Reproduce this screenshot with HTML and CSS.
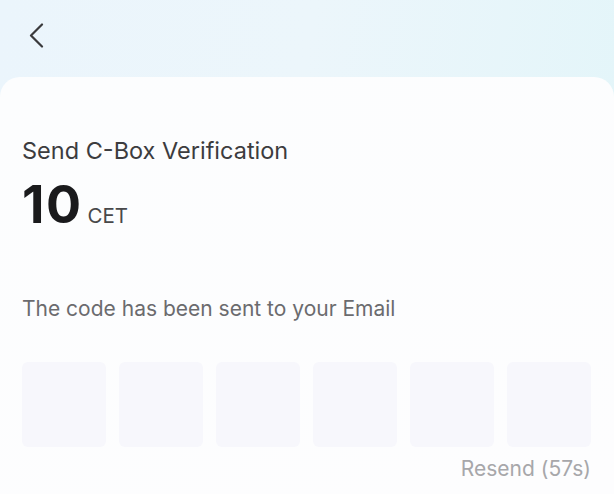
FILE: index.html
```html
<!DOCTYPE html>
<html>
<head>
<meta charset="utf-8">
<link rel="stylesheet" href="styles.css">
</head>
<body>
<div class="page">
  <header class="topbar">
    <button class="back" aria-label="Back">
      <svg width="16" height="26" viewBox="0 0 16 26"><path d="M13 1.5 L2 12.5 L13 23.5" fill="none" stroke="#3a3a3c" stroke-width="2.2" stroke-linecap="round" stroke-linejoin="round"/></svg>
    </button>
  </header>
  <main class="card">
    <h1 class="title">Send C-Box Verification</h1>
    <div class="amount"><span class="num">10</span><span class="unit">CET</span></div>
    <p class="hint">The code has been sent to your Email</p>
    <div class="code">
      <div class="cell"></div>
      <div class="cell"></div>
      <div class="cell"></div>
      <div class="cell"></div>
      <div class="cell"></div>
      <div class="cell"></div>
    </div>
    <div class="resend">Resend (57s)</div>
  </main>
</div>
</body>
</html>
```
FILE: styles.css
```css
* { box-sizing: border-box; }
html, body { margin: 0; padding: 0; }
body {
  width: 614px;
  height: 494px;
  overflow: hidden;
  font-family: Inter, "Noto Sans", sans-serif;
  background: linear-gradient(100deg, #ebf5fc 0%, #ecf6fb 45%, #e2f5f9 100%);
}
.page { display: flex; flex-direction: column; height: 494px; }
.topbar { height: 77px; padding: 23px 0 0 29px; }
.back { border: 0; background: none; padding: 0; display: block; width: 16px; height: 26px; }
.back svg { display: block; }
.card {
  flex: 1;
  background: linear-gradient(160deg, #fcfdfe 0%, #fdfdfe 100%);
  border-radius: 20px 20px 0 0;
  padding: 60px 23px 0 22px;
}
.title {
  margin: 0;
  font-size: 23.5px;
  font-weight: 400;
  color: #3c3c3e;
  line-height: 28px;
}
.amount { display: flex; align-items: baseline; margin-top: 12px; height: 56px; }
.num { font-size: 52px; font-weight: 700; color: #1a1a1c; line-height: 56px; letter-spacing: 1.5px; }
.unit { font-size: 20.5px; color: #48484a; margin-left: 5px; }
.hint {
  margin: 63px 0 0;
  font-size: 21px;
  color: #6b6b6e;
  line-height: 26px;
}
.code { display: flex; gap: 13px; margin-top: 40px; }
.cell { width: 84px; height: 85px; background: #f7f7fc; border-radius: 6px; }
.resend {
  text-align: right;
  font-size: 21px;
  color: #a7a7aa;
  margin-top: 9px;
  line-height: 26px;
}
```
